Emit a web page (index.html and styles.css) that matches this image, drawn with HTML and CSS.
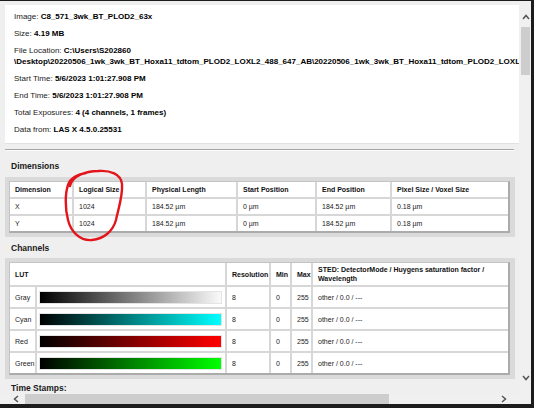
FILE: index.html
```html
<!DOCTYPE html>
<html>
<head>
<meta charset="utf-8">
<link rel="stylesheet" href="styles.css">
</head>
<body>
<div class="window">
  <div class="content">
    <div class="info">
      <p>Image: <b>C8_571_3wk_BT_PLOD2_63x</b></p>
      <p>Size: <b>4.19 MB</b></p>
      <p>File Location: <b>C:\Users\S202860<br>\Desktop\20220506_1wk_3wk_BT_Hoxa11_tdtom_PLOD2_LOXL2_488_647_AB\20220506_1wk_3wk_BT_Hoxa11_tdtom_PLOD2_LOXL2_488_647_AB.lif</b></p>
      <p>Start Time: <b>5/6/2023 1:01:27.908 PM</b></p>
      <p>End Time: <b>5/6/2023 1:01:27.908 PM</b></p>
      <p>Total Exposures: <b>4 (4 channels, 1 frames)</b></p>
      <p>Data from: <b>LAS X 4.5.0.25531</b></p>
    </div>
    <div class="sep"></div>
    <h3 class="heading first">Dimensions</h3>
    <div class="frame">
      <table class="grid">
        <colgroup>
          <col style="width:64px"><col style="width:73px"><col style="width:91px"><col style="width:79px"><col style="width:75px"><col style="width:116px">
        </colgroup>
        <tr class="head">
          <td>Dimension</td><td>Logical Size</td><td>Physical Length</td><td>Start Position</td><td>End Position</td><td>Pixel Size / Voxel Size</td>
        </tr>
        <tr>
          <td>X</td><td>1024</td><td>184.52 µm</td><td>0 µm</td><td>184.52 µm</td><td>0.18 µm</td>
        </tr>
        <tr>
          <td>Y</td><td>1024</td><td>184.52 µm</td><td>0 µm</td><td>184.52 µm</td><td>0.18 µm</td>
        </tr>
      </table>
    </div>
    <h3 class="heading">Channels</h3>
    <div class="frame">
      <table class="grid channels">
        <colgroup>
          <col style="width:27px"><col style="width:190px"><col style="width:44px"><col style="width:21px"><col style="width:21px"><col style="width:195px">
        </colgroup>
        <tr class="head">
          <td colspan="2">LUT</td><td>Resolution</td><td>Min</td><td>Max</td><td>STED: DetectorMode / Huygens saturation factor / Wavelength</td>
        </tr>
        <tr>
          <td>Gray</td><td class="barcell"><div class="bar lut-gray"></div></td><td>8</td><td>0</td><td>255</td><td>other / 0.0 / ---</td>
        </tr>
        <tr>
          <td>Cyan</td><td class="barcell"><div class="bar lut-cyan"></div></td><td>8</td><td>0</td><td>255</td><td>other / 0.0 / ---</td>
        </tr>
        <tr>
          <td>Red</td><td class="barcell"><div class="bar lut-red"></div></td><td>8</td><td>0</td><td>255</td><td>other / 0.0 / ---</td>
        </tr>
        <tr>
          <td>Green</td><td class="barcell"><div class="bar lut-green"></div></td><td>8</td><td>0</td><td>255</td><td>other / 0.0 / ---</td>
        </tr>
      </table>
    </div>
    <h3 class="heading last">Time Stamps:</h3>
  </div>

  <div class="vscroll">
    <div class="arrow-v up"><svg width="8" height="6" viewBox="0 0 8 6"><polyline points="1,5 4,1.5 7,5" /></svg></div>
    <div class="vthumb"></div>
    <div class="spacer"></div>
    <div class="arrow-v down"><svg width="8" height="6" viewBox="0 0 8 6"><polyline points="1,1 4,4.5 7,1" /></svg></div>
  </div>

  <div class="hscroll">
    <div class="arrow-h left"><svg width="6" height="8" viewBox="0 0 6 8"><polyline points="5,1 1.5,4 5,7" /></svg></div>
    <div class="hthumb"></div>
    <div class="spacer"></div>
    <div class="arrow-h right"><svg width="6" height="8" viewBox="0 0 6 8"><polyline points="1,1 4.5,4 1,7" /></svg></div>
  </div>
  <div class="corner"></div>
</div>

<svg class="annotation" width="534" height="408" viewBox="0 0 534 408">
  <path d="M 70 186 C 72 176, 86 171, 98 171 C 110 170, 121 174, 122 184 C 123 196, 118 210, 116 220 C 113 231, 104 239, 92 240 C 80 241, 71 232, 68 220 C 65 208, 65 194, 68 185 C 70 178, 78 174, 86 173" />
</svg>
</body>
</html>
```

FILE: styles.css
```css
html, body {
  margin: 0;
  padding: 0;
}

body {
  position: relative;
  width: 534px;
  height: 408px;
  overflow: hidden;
  background: #1c1c1c;
  font-family: "Liberation Sans", Arial, sans-serif;
  color: #000;
}

.window {
  margin-top: 1px;
  width: 531px;
  height: 403px;
  background: #efefef;
  display: grid;
  grid-template-columns: 519px 12px;
  grid-template-rows: 393px 10px;
  overflow: hidden;
}

.content {
  grid-column: 1;
  grid-row: 1;
  overflow: hidden;
  padding: 4px 0 0 5px;
}

.info {
  background: #fff;
  padding: 6px 9px 8px 9px;
  font-size: 8px;
  line-height: 11px;
  color: #1a1a1a;
  white-space: nowrap;
  overflow: hidden;
  border-bottom: 1px solid #e2e2e2;
  margin-bottom: -1px;
}

.info p {
  margin: 0 0 6px 0;
}

.info p:last-child {
  margin-bottom: 0;
}

.info b {
  color: #000;
}

.sep {
  margin: 6px 5px 0 0;
  border-top: 1px solid #a6a6a6;
  border-bottom: 1px solid #fbfbfb;
}

.heading {
  margin: 6px 0 5px 6px;
  font-size: 8.5px;
  line-height: 10px;
  font-weight: bold;
  color: #1a1a1a;
}

.heading.first {
  margin-top: 10px;
  margin-bottom: 6px;
}

.heading.last {
  margin-top: 4px;
}

.frame {
  margin-right: 4px;
  background: #dadada;
  padding: 4px 5px 4px 4px;
}

.grid {
  width: 501px;
  table-layout: fixed;
  border-collapse: separate;
  border-spacing: 0;
  background: #fff;
  border-top: 1px solid #c4c4c4;
  border-left: 1px solid #c4c4c4;
  border-right: 2px solid #ababab;
  border-bottom: 2px solid #ababab;
  font-size: 7px;
  line-height: 9px;
  color: #222;
}

.grid td {
  padding: 3px 5px;
  border-right: 2px solid #d7d7d7;
  border-bottom: 2px solid #d7d7d7;
  white-space: nowrap;
  overflow: hidden;
  vertical-align: middle;
}

.grid td:last-child {
  border-right: 0;
}

.grid tr:last-child td {
  border-bottom: 0;
}

.grid .head td {
  font-weight: bold;
  color: #111;
}

.channels .head td {
  padding: 2px 5px;
  white-space: normal;
}

.channels td.barcell {
  padding: 4px 3px 3px 2px;
}

.bar {
  height: 11px;
  border: 1px solid #e4e4e4;
}

.lut-gray {
  background: linear-gradient(to right, #000, #fafafa);
}

.lut-cyan {
  background: linear-gradient(to right, #000, #00ffff);
}

.lut-red {
  background: linear-gradient(to right, #000, #ff0000);
}

.lut-green {
  background: linear-gradient(to right, #000, #00ff00);
}

.vscroll {
  grid-column: 2;
  grid-row: 1;
  background: #f0f0f0;
  display: flex;
  flex-direction: column;
}

.arrow-v {
  height: 20px;
  display: flex;
  align-items: center;
  justify-content: center;
  padding-left: 2px;
}

.arrow-v.up {
  margin-top: 6px;
}

.arrow-v.down {
  margin-bottom: 6px;
}

.vthumb {
  height: 48px;
  margin: 0 1px 0 2px;
  background: #cdcdcd;
}

.spacer {
  flex: 1;
}

.hscroll {
  grid-column: 1;
  grid-row: 2;
  background: #f0f0f0;
  display: flex;
  align-items: stretch;
}

.arrow-h {
  width: 18px;
  display: flex;
  align-items: center;
  justify-content: center;
}

.arrow-h.left {
  margin-left: 7px;
}

.arrow-h.right {
  margin-right: 6px;
}

.hthumb {
  width: 364px;
  background: #cdcdcd;
}

.corner {
  grid-column: 2;
  grid-row: 2;
  background: #f0f0f0;
}

.arrow-v svg polyline,
.arrow-h svg polyline {
  fill: none;
  stroke: #555;
  stroke-width: 1.5;
}

.annotation {
  position: absolute;
  left: 0;
  top: 0;
  pointer-events: none;
}

.annotation path {
  fill: none;
  stroke: #e3151b;
  stroke-width: 2.4;
  stroke-linecap: round;
}
```
